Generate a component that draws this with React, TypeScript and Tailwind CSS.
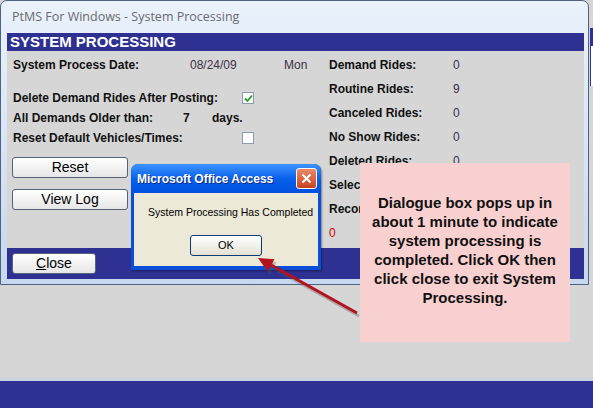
import React from 'react';

const navy = 'bg-[#2e3192]';

const rightRows = [
  { label: 'Demand Rides:', value: '0' },
  { label: 'Routine Rides:', value: '9' },
  { label: 'Canceled Rides:', value: '0' },
  { label: 'No Show Rides:', value: '0' },
  { label: 'Deleted Rides:', value: '0' },
  { label: 'Selected Rides:', value: '0' },
  { label: 'Records Posted:', value: '0' },
];

const Checkbox = ({ checked }: { checked?: boolean }) => (
  <div className="w-[12px] h-[12px] border border-[#8a9bb0] bg-white flex items-center justify-center">
    {checked && (
      <svg width="9" height="9" viewBox="0 0 9 9">
        <path d="M1 4.5 L3.5 7 L8 1.5" fill="none" stroke="#2a9a2a" strokeWidth="1.8" />
      </svg>
    )}
  </div>
);

const FormButton = ({ children, w }: { children: React.ReactNode; w: string }) => (
  <div
    className={`${w} h-[21px] rounded-[3px] border border-[#56637a] bg-gradient-to-b from-white to-[#e6e6e6] flex items-center justify-center text-[14px] text-black`}
  >
    {children}
  </div>
);

const App = () => {
  return (
    <div className="relative w-[593px] h-[408px] overflow-hidden bg-[#d6d6d6] flex flex-col font-['Liberation_Sans',Arial,sans-serif]">
      {/* main window */}
      <div className="w-[589px] rounded-t-[7px] border border-[#4f6280] bg-gradient-to-b from-[#eaf2fb] to-[#c6d8ee] flex flex-col">
        <div className="h-[32px] pl-[11px] flex items-center text-[12.5px] text-[#6a6a6a] font-['Open_Sans',sans-serif]">
          PtMS For Windows - System Processing
        </div>
        <div className="ml-[6px] mr-[4px] flex flex-col">
          <div className={`h-[18px] ${navy} pl-[3px] flex items-center text-[15px] font-bold text-white`}>
            SYSTEM PROCESSING
          </div>
          <div className="h-[197px] bg-[#d6d6d6] pt-[2px] flex text-[12px] text-[#111]">
            <div className="w-[322px] pl-[6px] flex flex-col">
              <div className="h-[24px] flex items-center">
                <span className="w-[177px] font-bold">System Process Date:</span>
                <span className="w-[94px] text-[#3a3046]">08/24/09</span>
                <span className="text-[#3a3046]">Mon</span>
              </div>
              <div className="mt-[11px] h-[20px] flex items-center">
                <span className="w-[229px] font-bold">Delete Demand Rides After Posting:</span>
                <Checkbox checked />
              </div>
              <div className="h-[20px] flex items-center font-bold">
                <span className="w-[170px]">All Demands Older than:</span>
                <span className="w-[29px]">7</span>
                <span>days.</span>
              </div>
              <div className="h-[20px] flex items-center">
                <span className="w-[229px] font-bold">Reset Default Vehicles/Times:</span>
                <Checkbox />
              </div>
              <div className="mt-[9px] -ml-[1px]">
                <FormButton w="w-[116px]">Reset</FormButton>
              </div>
              <div className="mt-[11px] -ml-[1px]">
                <FormButton w="w-[116px]">View Log</FormButton>
              </div>
            </div>
            <div className="flex flex-col">
              {rightRows.map((row) => (
                <div key={row.label} className="h-[24px] flex items-center">
                  <span className="w-[124px] font-bold">{row.label}</span>
                  <span className="text-[#3a3046]">{row.value}</span>
                </div>
              ))}
              <div className="h-[24px] flex items-center text-[#e00000]">0</div>
            </div>
          </div>
          <div className={`h-[31px] ${navy} pl-[5px] pt-[5px]`}>
            <FormButton w="w-[84px]">
              <span>
                <span className="underline">C</span>lose
              </span>
            </FormButton>
          </div>
        </div>
        <div className="h-[5px]" />
      </div>

      <div className="flex-1 border-b-[3px] border-[#c8d4e4]" />
      <div className={`h-[27px] ${navy}`} />

      {/* window peeking at right edge */}
      <div className="absolute left-[590px] top-[28px] w-[3px] h-[18px] bg-[#2e3192]" />
      <div className="absolute left-[590px] top-[46px] w-[3px] h-[40px] bg-white border-l border-[#2e3192]" />

      {/* access message box */}
      <div className="absolute left-[131px] top-[164px] w-[190px] rounded-t-[7px] bg-[#0a4fd8] px-[3px] pb-[4px] shadow-[1px_1px_2px_rgba(0,0,0,0.4)]">
        <div className="h-[29px] -mx-[3px] px-[6px] pr-[4px] rounded-t-[7px] bg-gradient-to-b from-[#3c94ff] via-[#0860eb] to-[#0050de] flex items-center justify-between">
          <span className="text-[12px] font-bold text-white [text-shadow:1px_1px_0_#0a2a8a]">
            Microsoft Office Access
          </span>
          <div className="w-[21px] h-[21px] rounded-[3px] border border-white bg-gradient-to-b from-[#ec8a68] to-[#c8401c] flex items-center justify-center">
            <svg width="11" height="11" viewBox="0 0 11 11">
              <path d="M1.5 1.5 L9.5 9.5 M9.5 1.5 L1.5 9.5" stroke="white" strokeWidth="2" />
            </svg>
          </div>
        </div>
        <div className="h-[73px] bg-[#ece9d8] pt-[12px] flex flex-col">
          <div className="pl-[14px] whitespace-nowrap text-[10.5px] leading-[14px] text-black">
            System Processing Has Completed
          </div>
          <div className="mt-[16px] ml-[56px] w-[72px] h-[21px] rounded-[3px] border border-[#003c74] bg-gradient-to-b from-white to-[#e4e1d4] flex items-center justify-center text-[11px] text-black">
            OK
          </div>
        </div>
      </div>

      {/* red arrow */}
      <svg className="absolute left-[250px] top-[250px]" width="115" height="70" viewBox="0 0 115 70">
        <g transform="translate(2 3)" opacity="0.35">
          <path d="M107 63 L21 15" stroke="#555" strokeWidth="3" />
          <polygon points="8,8 24.5,9.2 17.7,21.4" fill="#555" />
        </g>
        <path d="M107 63 L21 15" stroke="#b3121f" strokeWidth="3" />
        <polygon points="8,8 24.5,9.2 17.7,21.4" fill="#b3121f" />
      </svg>

      {/* callout */}
      <div className="absolute left-[360px] top-[163px] w-[210px] h-[179px] bg-[#f9d0d0] flex items-center justify-center pb-[6px]">
        <p className="text-center text-[15px] leading-[19px] font-bold text-[#111]">
          Dialogue box pops up in about 1 minute to indicate system processing is completed. Click OK then click close to exit System Processing.
        </p>
      </div>
    </div>
  );
};

export default App;
